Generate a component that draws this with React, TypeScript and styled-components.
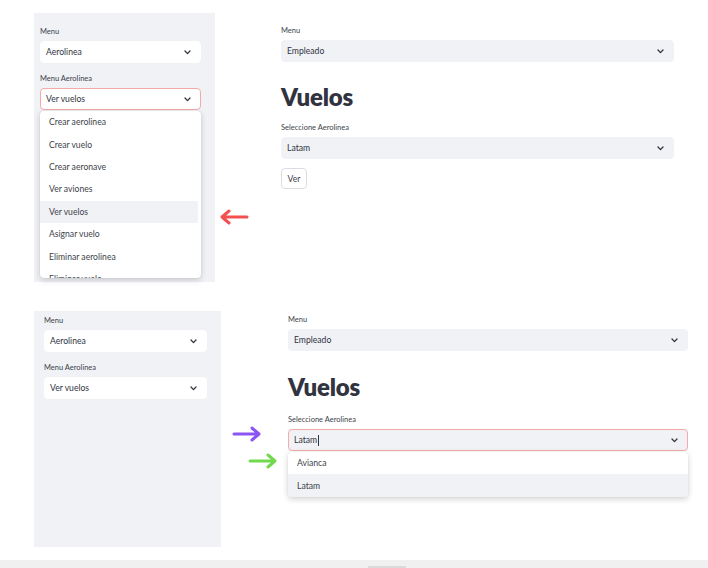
import styled, { createGlobalStyle } from "styled-components";

const GlobalStyle = createGlobalStyle`
  html, body {
    margin: 0;
    padding: 0;
    background: #fff;
  }
  body {
    width: 708px;
    height: 568px;
    overflow: hidden;
    font-family: "Lato", "Noto Sans", sans-serif;
    color: #31333f;
  }
  * {
    box-sizing: border-box;
  }
`;

const Page = styled.div`
  width: 708px;
  height: 568px;
  display: flex;
  flex-direction: column;
  position: relative;
`;

const Shot = styled.section<{ $height: number }>`
  height: ${(p) => p.$height}px;
  display: flex;
  align-items: flex-start;
  position: relative;
`;

const Sidebar = styled.aside<{ $top: number; $width: number; $height: number; $padTop: number; $padLeft: number }>`
  margin-left: 34px;
  margin-top: ${(p) => p.$top}px;
  width: ${(p) => p.$width}px;
  height: ${(p) => p.$height}px;
  padding: ${(p) => p.$padTop}px 14px 0 ${(p) => p.$padLeft}px;
  background: #f0f2f6;
  display: flex;
  flex-direction: column;
  gap: 11px;
`;

const Main = styled.main<{ $left: number; $width: number; $padTop: number }>`
  margin-left: ${(p) => p.$left}px;
  width: ${(p) => p.$width}px;
  padding-top: ${(p) => p.$padTop}px;
  display: flex;
  flex-direction: column;
`;

const Field = styled.div`
  display: flex;
  flex-direction: column;
  gap: 4px;
  position: relative;
`;

const Label = styled.label`
  font-size: 7.5px;
  line-height: 10px;
  color: #3d3f4a;
`;

const SelectBox = styled.div<{ $variant: "white" | "gray"; $focused?: boolean }>`
  height: 22px;
  border-radius: 4px;
  background: ${(p) => (p.$variant === "white" ? "#ffffff" : "#f0f2f6")};
  border: 1px solid ${(p) => (p.$focused ? "#f6a9a9" : p.$variant === "white" ? "#ffffff" : "#f0f2f6")};
  display: flex;
  align-items: center;
  justify-content: space-between;
  padding: 0 9px 0 5px;
  font-size: 8.6px;
  color: #31333f;
`;

const Value = styled.span`
  display: flex;
  align-items: center;
`;

const Caret = styled.span`
  display: inline-block;
  width: 0.6px;
  height: 11px;
  margin-left: 1px;
  background: #31333f;
`;

const Chevron = () => (
  <svg width="7" height="5" viewBox="0 0 7 5" fill="none">
    <path d="M1 1 L3.5 3.6 L6 1" stroke="#31333f" strokeWidth="1.3" strokeLinecap="round" strokeLinejoin="round" />
  </svg>
);

const Menu = styled.ul<{ $height: number }>`
  position: absolute;
  left: 0;
  right: 0;
  top: calc(100% + 1px);
  height: ${(p) => p.$height}px;
  margin: 0;
  padding: 0;
  list-style: none;
  overflow: hidden;
  background: #ffffff;
  border-radius: 4px;
  box-shadow: 0 2px 6px rgba(0, 0, 0, 0.18), 0 0 1px rgba(0, 0, 0, 0.15);
  z-index: 2;
`;

const Option = styled.li<{ $active?: boolean; $inset: number }>`
  height: 22.4px;
  display: flex;
  align-items: center;
  padding-left: 9px;
  margin-right: ${(p) => p.$inset}px;
  font-size: 8.6px;
  color: #3d3f4a;
  background: ${(p) => (p.$active ? "#f0f2f6" : "transparent")};
`;

const Heading = styled.h1<{ $before: number; $after: number }>`
  margin: ${(p) => p.$before}px 0 ${(p) => p.$after}px;
  font-size: 24px;
  line-height: 32px;
  font-weight: 800;
  color: #31333f;
  letter-spacing: -0.2px;
`;

const Button = styled.button`
  margin-top: 9px;
  width: 26px;
  height: 21px;
  padding: 0;
  border: 1px solid #dcdde2;
  border-radius: 4px;
  background: #fff;
  font-family: inherit;
  font-size: 8.6px;
  color: #3d3f4a;
`;

const Arrow = styled.svg<{ $x: number; $y: number }>`
  position: absolute;
  left: ${(p) => p.$x}px;
  top: ${(p) => p.$y}px;
`;

const BottomBar = styled.footer`
  margin-top: auto;
  height: 8px;
  background: #f0f0f0;
  position: relative;
`;

const Thumb = styled.div`
  position: absolute;
  left: 368px;
  bottom: 0;
  width: 38px;
  height: 2px;
  border-radius: 1px 1px 0 0;
  background: #dadada;
`;

function ArrowIcon({ x, y, color, dir }: { x: number; y: number; color: string; dir: "left" | "right" }) {
  const d = dir === "left" ? "M29 8 H4 M11 2 L4 8 L11 14" : "M2 8 H27 M20 2 L27 8 L20 14";
  return (
    <Arrow $x={x} $y={y} width="31" height="16" viewBox="0 0 31 16">
      <path d={d} stroke={color} strokeWidth="3" fill="none" strokeLinecap="round" strokeLinejoin="round" />
    </Arrow>
  );
}

const aerolineaOptions = [
  "Crear aerolinea",
  "Crear vuelo",
  "Crear aeronave",
  "Ver aviones",
  "Ver vuelos",
  "Asignar vuelo",
  "Eliminar aerolinea",
  "Eliminar vuelo",
];

export default function App() {
  return (
    <>
      <GlobalStyle />
      <Page>
        <Shot $height={300}>
          <Sidebar $top={13} $width={181} $height={269} $padTop={14} $padLeft={6}>
            <Field>
              <Label>Menu</Label>
              <SelectBox $variant="white">
                <Value>Aerolinea</Value>
                <Chevron />
              </SelectBox>
            </Field>
            <Field>
              <Label>Menu Aerolinea</Label>
              <SelectBox $variant="white" $focused>
                <Value>Ver vuelos</Value>
                <Chevron />
              </SelectBox>
              <Menu $height={167}>
                {aerolineaOptions.map((o) => (
                  <Option key={o} $inset={3} $active={o === "Ver vuelos"}>
                    {o}
                  </Option>
                ))}
              </Menu>
            </Field>
          </Sidebar>
          <Main $left={66} $width={393} $padTop={26}>
            <Field>
              <Label>Menu</Label>
              <SelectBox $variant="gray">
                <Value>Empleado</Value>
                <Chevron />
              </SelectBox>
            </Field>
            <Heading $before={19} $after={10}>Vuelos</Heading>
            <Field>
              <Label>Seleccione Aerolinea</Label>
              <SelectBox $variant="gray">
                <Value>Latam</Value>
                <Chevron />
              </SelectBox>
            </Field>
            <div>
              <Button>Ver</Button>
            </div>
          </Main>
          <ArrowIcon x={218} y={209} color="#f4504f" dir="left" />
        </Shot>

        <Shot $height={260}>
          <Sidebar $top={11} $width={187} $height={236} $padTop={5} $padLeft={10}>
            <Field>
              <Label>Menu</Label>
              <SelectBox $variant="white">
                <Value>Aerolinea</Value>
                <Chevron />
              </SelectBox>
            </Field>
            <Field>
              <Label>Menu Aerolinea</Label>
              <SelectBox $variant="white">
                <Value>Ver vuelos</Value>
                <Chevron />
              </SelectBox>
            </Field>
          </Sidebar>
          <Main $left={67} $width={400} $padTop={15}>
            <Field>
              <Label>Menu</Label>
              <SelectBox $variant="gray">
                <Value>Empleado</Value>
                <Chevron />
              </SelectBox>
            </Field>
            <Heading $before={20} $after={12}>Vuelos</Heading>
            <Field>
              <Label>Seleccione Aerolinea</Label>
              <SelectBox $variant="gray" $focused>
                <Value>
                  Latam
                  <Caret />
                </Value>
                <Chevron />
              </SelectBox>
              <Menu $height={45}>
                <Option $inset={0}>Avianca</Option>
                <Option $inset={0} $active>
                  Latam
                </Option>
              </Menu>
            </Field>
          </Main>
          <ArrowIcon x={232} y={126} color="#8b55f2" dir="right" />
          <ArrowIcon x={248} y={153} color="#72d94e" dir="right" />
        </Shot>

        <BottomBar>
          <Thumb />
        </BottomBar>
      </Page>
    </>
  );
}
